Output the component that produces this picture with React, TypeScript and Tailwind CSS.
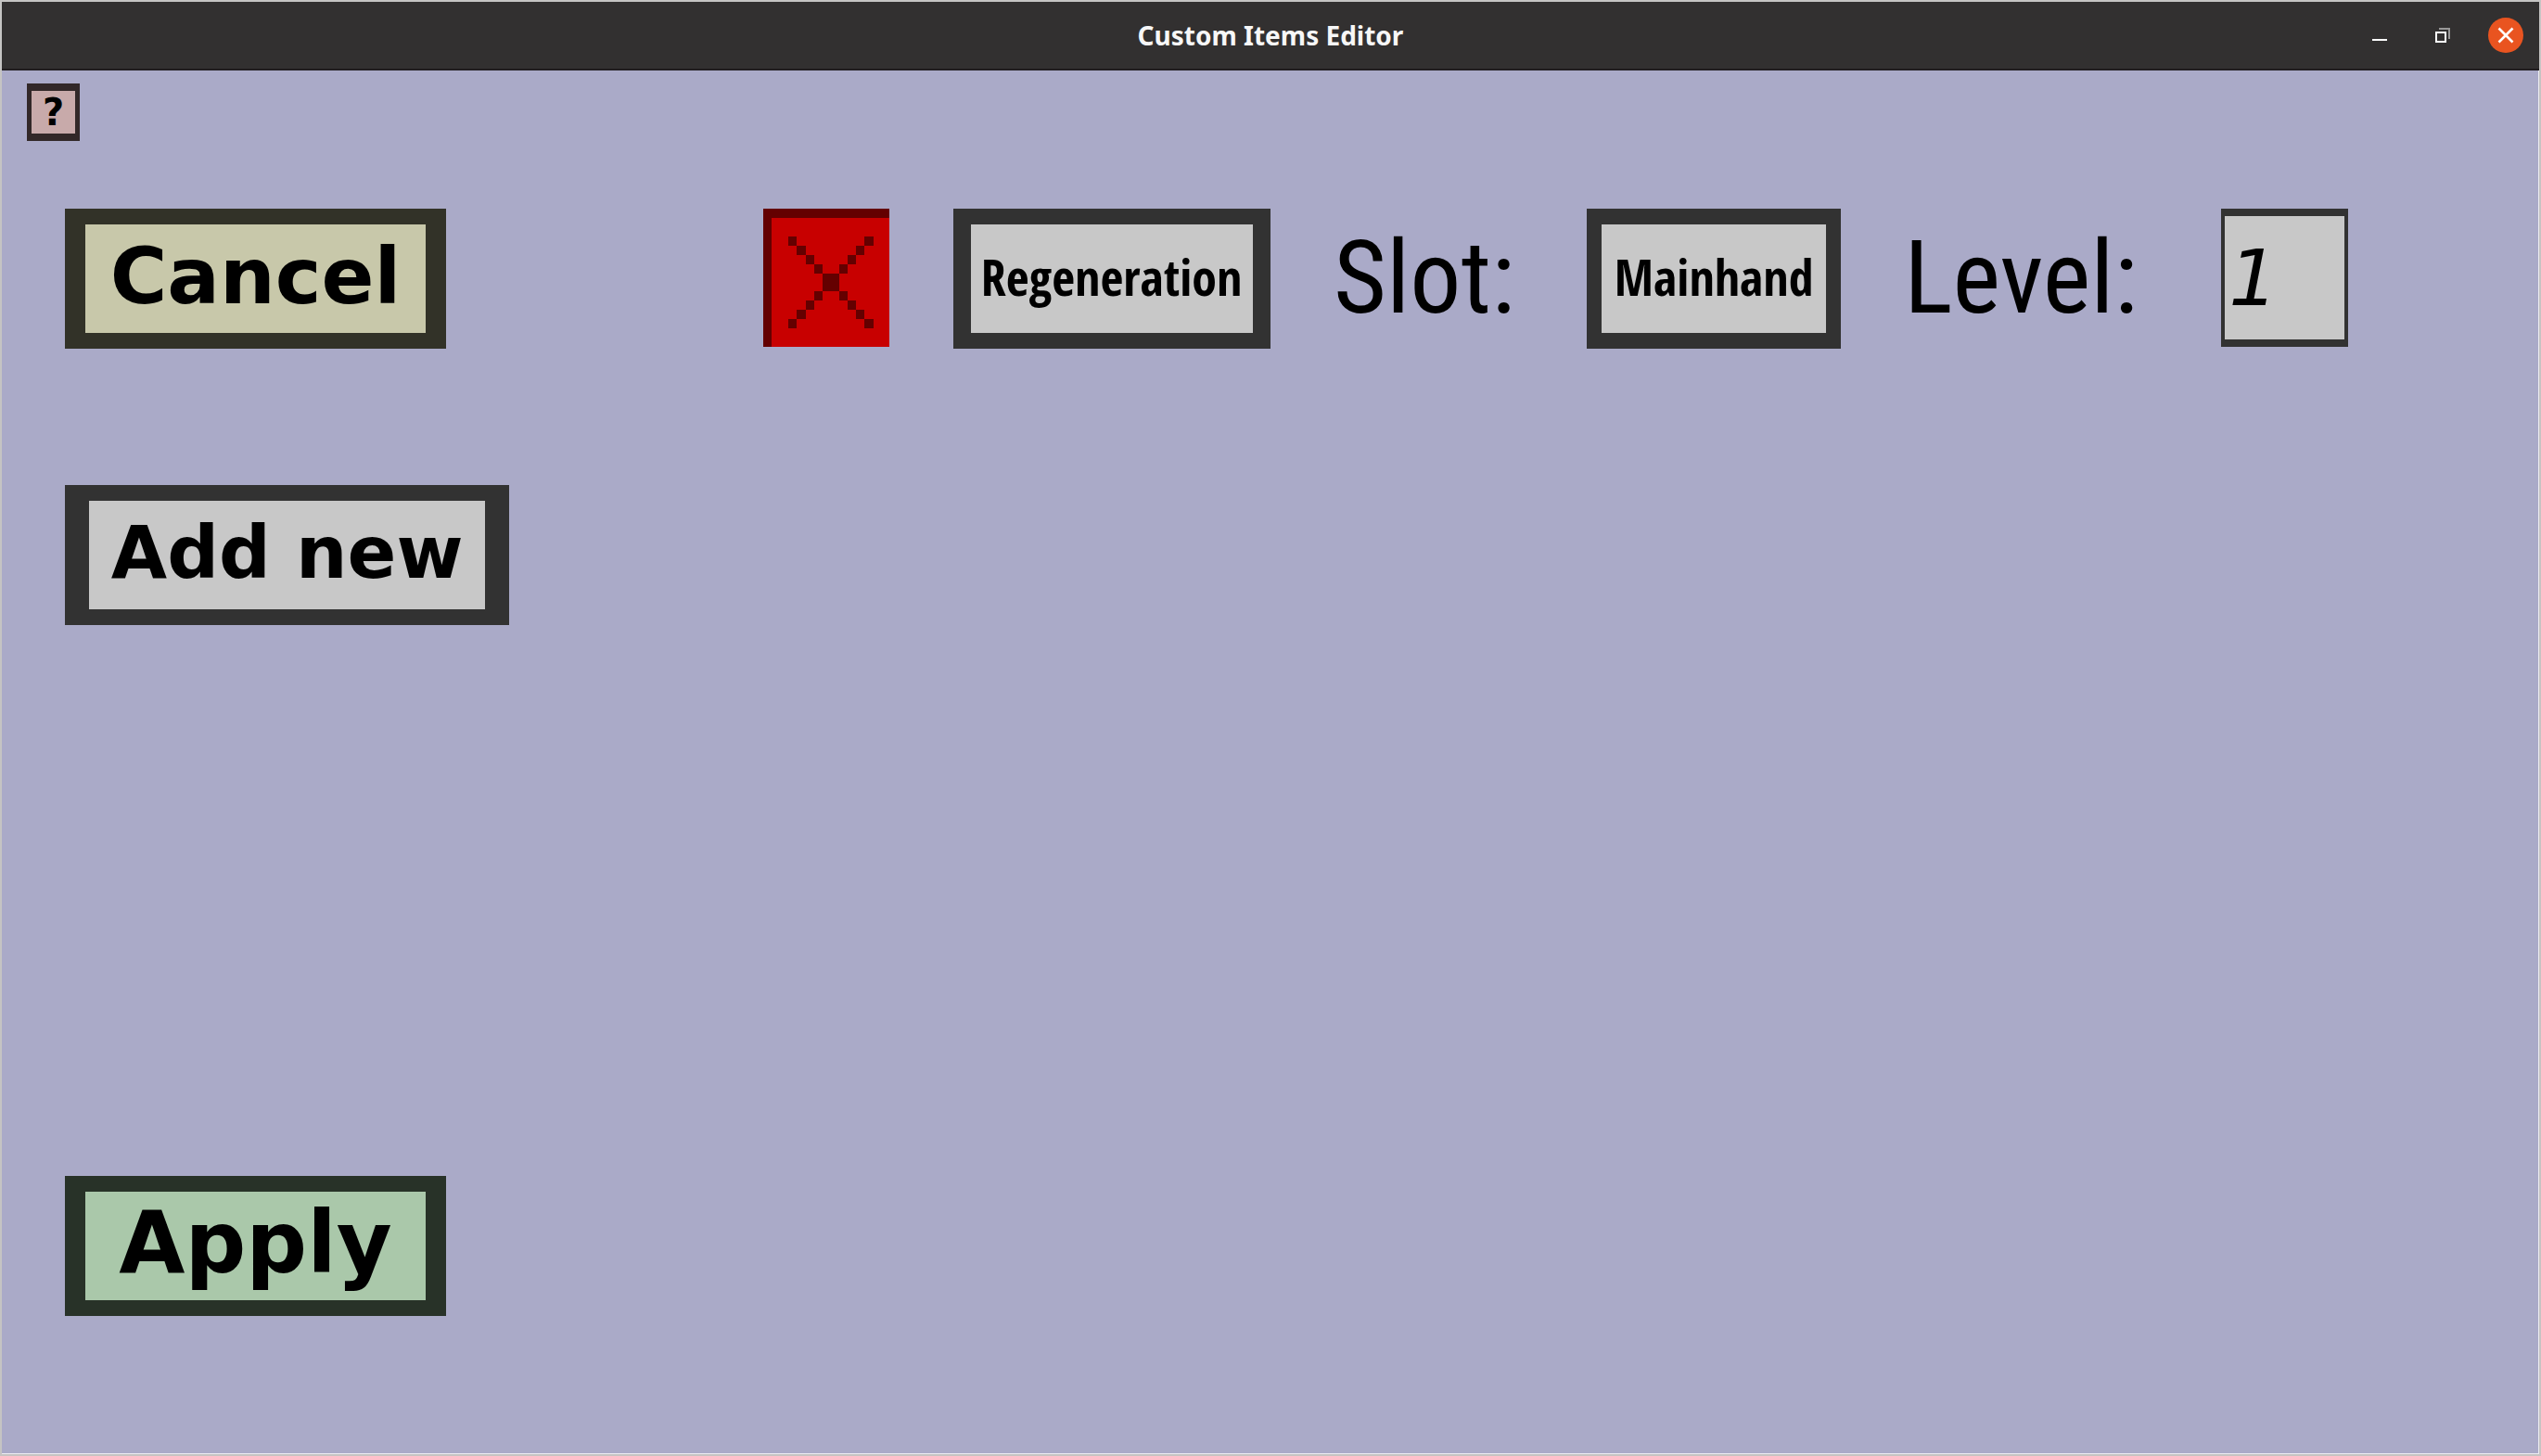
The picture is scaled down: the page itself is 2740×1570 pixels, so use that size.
import { useState } from "react";
import type { ReactNode } from "react";

function TitleButton({ label, className = "", children }: { label: string; className?: string; children: ReactNode }) {
  return (
    <button type="button" aria-label={label} className={`flex size-[38px] items-center justify-center rounded-full ${className}`}>
      {children}
    </button>
  );
}

function TitleBar() {
  return (
    <header className="grid h-[74px] grid-cols-[1fr_auto_1fr] items-center border-b-2 border-[#211d20] bg-[#323030]">
      <h1 className="col-start-2 font-['Noto_Sans',sans-serif] text-[28px] leading-9 font-bold text-[#f7f7f7]">Custom Items Editor</h1>
      <div className="flex justify-end gap-[30px] pr-[17px]">
        <TitleButton label="Minimize">
          <svg width="38" height="38" viewBox="0 0 38 38" shapeRendering="crispEdges">
            <rect x="11" y="23" width="16" height="2" fill="#fff" />
          </svg>
        </TitleButton>
        <TitleButton label="Restore">
          <svg width="38" height="38" viewBox="0 0 38 38" shapeRendering="crispEdges">
            <path d="M15 11h12v12h-2v-10h-10z" fill="#989797" />
            <rect x="12" y="16" width="10" height="10" fill="none" stroke="#fff" strokeWidth="2" />
          </svg>
        </TitleButton>
        <TitleButton label="Close" className="bg-[#e95420]">
          <svg width="38" height="38" viewBox="0 0 38 38">
            <path d="M11.500 11.500l15 15M26.500 11.500l-15 15" stroke="#fff" strokeWidth="2.600" />
          </svg>
        </TitleButton>
      </div>
    </header>
  );
}

const CROSS = [3, 4, 5, 6, 7, 8, 9, 10, 11, 12];

function RemoveIcon() {
  return (
    <svg className="size-full" viewBox="0 0 15 15" preserveAspectRatio="none" shapeRendering="crispEdges" aria-hidden="true">
      <rect width="15" height="15" fill="#c80000" />
      <path d="M0 0h15v1h-14v14h-1z" fill="#640000" />
      {CROSS.map((i) => (
        <g key={i} fill="#640000">
          <rect x={i} y={i} width="1" height="1" />
          <rect x={15 - i} y={i} width="1" height="1" />
        </g>
      ))}
    </svg>
  );
}

export default function App() {
  const [level, setLevel] = useState("1");

  return (
    <div className="flex min-h-screen flex-col border-2 border-[#c5c4c3] bg-[#aaaac8] font-['DejaVu_Sans',sans-serif] text-black">
      <TitleBar />
      <main className="flex grow flex-col border-r border-b border-[#ececf2] pt-[14px] pb-[148px]">
        <button
          type="button"
          aria-label="Help"
          className="ml-[27px] flex h-[62px] w-[57px] items-center justify-center border-x-[5px] border-y-8 border-[#322828] bg-[#c8aaaa] text-[40px] leading-none font-bold"
        >
          ?
        </button>

        <div className="mt-[73px] grid grid-cols-[repeat(40,minmax(0,1fr))] items-start">
          <button
            type="button"
            className="col-span-6 col-start-2 flex h-[151px] items-center justify-center border-x-[22px] border-y-[17px] border-[#323228] bg-[#c8c8aa] pb-1.5 text-[84px] leading-none font-bold"
          >
            Cancel
          </button>
          <button type="button" aria-label="Remove effect" className="col-span-2 col-start-13 h-[149px]">
            <RemoveIcon />
          </button>
          <button
            type="button"
            className="col-span-5 col-start-16 flex h-[151px] items-center justify-center border-x-[19px] border-y-[17px] border-[#323232] bg-[#c8c8c8] pb-1.5 font-['Open_Sans_Condensed','DejaVu_Sans_Condensed',sans-serif] text-[54px] leading-none font-bold"
          >
            Regeneration
          </button>
          <span className="col-span-4 col-start-22 font-['Roboto_Condensed','DejaVu_Sans_Condensed',sans-serif] text-[110px] leading-[149px]">
            Slot:
          </span>
          <button
            type="button"
            className="col-span-4 col-start-26 flex h-[151px] items-center justify-center border-x-[16px] border-y-[17px] border-[#323232] bg-[#c8c8c8] pb-1.5 font-['Open_Sans_Condensed','DejaVu_Sans_Condensed',sans-serif] text-[54px] leading-none font-bold"
          >
            Mainhand
          </button>
          <label
            htmlFor="level"
            className="col-span-5 col-start-31 font-['Roboto_Condensed','DejaVu_Sans_Condensed',sans-serif] text-[110px] leading-[149px]"
          >
            Level:
          </label>
          <input
            id="level"
            type="text"
            value={level}
            onChange={(e) => setLevel(e.target.value)}
            className="col-span-2 col-start-36 h-[149px] w-full border-x-4 border-y-8 border-[#323232] bg-[#c8c8c8] pl-1 text-[84px] leading-none italic outline-none"
          />
        </div>

        <div className="mt-[147px] grid grid-cols-[repeat(40,minmax(0,1fr))]">
          <button
            type="button"
            className="col-span-7 col-start-2 flex h-[151px] items-center justify-center border-x-[26px] border-y-[17px] border-[#323232] bg-[#c8c8c8] pb-1.5 text-[78px] leading-none font-bold"
          >
            Add new
          </button>
        </div>

        <div className="mt-auto grid grid-cols-[repeat(40,minmax(0,1fr))]">
          <button
            type="button"
            className="col-span-6 col-start-2 flex h-[151px] items-center justify-center border-x-[22px] border-y-[17px] border-[#283228] bg-[#aac8aa] pb-1.5 text-[92px] leading-none font-bold"
          >
            Apply
          </button>
        </div>
      </main>
    </div>
  );
}
